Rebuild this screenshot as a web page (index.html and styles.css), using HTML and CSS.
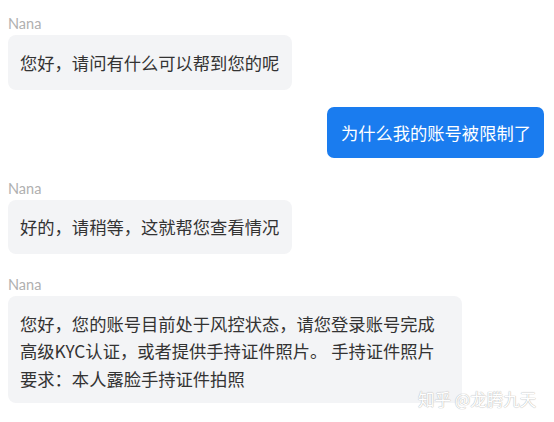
FILE: index.html
```html
<!DOCTYPE html>
<html lang="zh-CN">
<head>
  <meta charset="UTF-8" />
  <meta name="viewport" content="width=device-width, initial-scale=1.0" />
  <title>Chat</title>
  <link rel="stylesheet" href="styles.css">
</head>
<body>

  <main class="chat">
    <!-- agent -->
    <div class="msg agent">
      <div class="name">Nana</div>
      <div class="bubble">您好，请问有什么可以帮到您的呢</div>
    </div>

    <!-- user -->
    <div class="msg user">
      <div class="bubble">为什么我的账号被限制了</div>
    </div>

    <div class="msg agent">
      <div class="name">Nana</div>
      <div class="bubble">好的，请稍等，这就帮您查看情况</div>
    </div>

    <div class="msg agent">
      <div class="name">Nana</div>
      <div class="bubble">您好，您的账号目前处于风控状态，请您登录账号完成高级KYC认证，或者提供手持证件照片。 手持证件照片要求：本人露脸手持证件拍照</div>
    </div>
  </main>

  <div class="watermark">知乎 @龙腾九天</div>

</body>
</html>
```

FILE: styles.css
```css
* { box-sizing: border-box; margin: 0; padding: 0; }

body {
  font-family: "Noto Sans CJK SC", "Noto Sans", sans-serif;
  background: #fff;
  color: #333;
  width: 554px;
  height: 422px;
  overflow: hidden;
  position: relative;
}

.chat {
  display: flex;
  flex-direction: column;
  padding: 15px 10px 0 8px;
}

.msg {
  display: flex;
  flex-direction: column;
  align-items: flex-start;
}

.msg.user {
  align-items: flex-end;
  margin: 17px 0 22px;
}

.msg.agent + .msg.agent { margin-top: 22px; }

.name {
  font-family: Lato, "Noto Sans", sans-serif;
  font-size: 14.5px;
  line-height: 17px;
  color: #b0b0b0;
  margin-bottom: 3px;
}

.bubble {
  font-size: 17.3px;
  line-height: 27.5px;
  padding: 13.5px 13px 13.5px 12px;
  background: #f3f4f6;
  border-radius: 8px;
  max-width: 454px;
}

.msg:last-child .bubble { padding-bottom: 11px; }

.user .bubble {
  background: #1a7cef;
  color: #fff;
  padding: 12px 13px 11.5px 14px;
  border-radius: 7px;
}

.watermark {
  position: absolute;
  left: 418px;
  top: 388px;
  font-size: 16.5px;
  line-height: 22px;
  color: #fff;
  text-shadow: 0 0 1px #b8b8b8, 0 0 1px #b8b8b8;
}
```
